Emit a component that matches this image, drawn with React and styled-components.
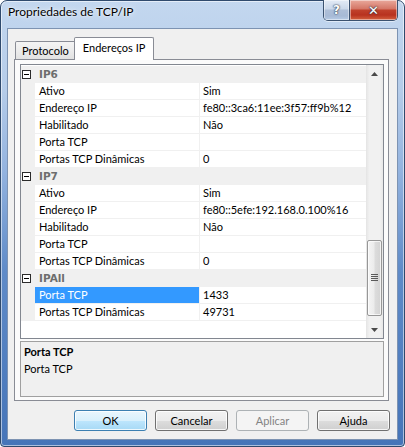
import React from 'react';
import styled, { createGlobalStyle, css } from 'styled-components';

const GlobalStyle = createGlobalStyle`
  html, body { margin: 0; padding: 0; background: #fff; }
  body { font-family: Lato, "Noto Sans", sans-serif; font-size: 11px; color: #000; }
  * { box-sizing: border-box; }
`;

const Window = styled.div`
  width: 405px;
  height: 447px;
  display: flex;
  flex-direction: column;
  border: 1px solid #2f4a6d;
  border-radius: 7px 7px 4px 4px;
  background: linear-gradient(180deg, #c3d7ef 0px, #b5cce9 90px, #93b3df 170px, #5f8bc8 270px, #4574b8 447px);
  box-shadow: inset 0 0 0 1px rgba(255, 255, 255, 0.55);
  padding: 0 6px 6px 6px;
`;

const TitleBar = styled.div`
  height: 27px;
  display: flex;
  align-items: flex-start;
`;

const Title = styled.div`
  flex: 1;
  padding: 3px 0 0 1px;
  line-height: 16px;
  font-size: 12px;
  color: #000;
  text-shadow: 0 0 6px rgba(255, 255, 255, 0.9), 0 0 2px rgba(255, 255, 255, 0.9);
`;

const CaptionGroup = styled.div`
  display: flex;
  margin-top: -1px;
  border: 1px solid #3b5270;
  border-top: none;
  border-radius: 0 0 5px 5px;
  overflow: hidden;
  box-shadow: 0 1px 0 rgba(255, 255, 255, 0.5);
`;

const CaptionButton = styled.div`
  height: 20px;
  width: ${(p) => (p.$close ? '47px' : '26px')};
  display: flex;
  align-items: center;
  justify-content: center;
  color: #fff;
  font-family: "DejaVu Sans", sans-serif;
  font-weight: bold;
  font-size: ${(p) => (p.$close ? '13px' : '12px')};
  text-shadow: 0 0 2px #1d2c40, 0 0 1px #1d2c40;
  box-shadow: inset 0 0 0 1px rgba(255, 255, 255, 0.45);
  ${(p) =>
    p.$close
      ? css`
          background: linear-gradient(180deg, #e9a99c 0%, #d47565 45%, #c0412c 50%, #b8321f 75%, #d4613f 100%);
        `
      : css`
          border-right: 1px solid #3b5270;
          background: linear-gradient(180deg, #e3ebf6 0%, #cbd8ea 45%, #aebfd8 50%, #a7bad6 80%, #b8cce6 100%);
        `}
`;

const Client = styled.div`
  flex: 1;
  display: flex;
  flex-direction: column;
  background: #f0f0f0;
  border: 1px solid #7d93b2;
  padding: 8px 8px 0 6px;
`;

const TabStrip = styled.div`
  height: 22px;
  display: flex;
  align-items: flex-end;
  padding-left: 1px;
`;

const Tab = styled.div`
  position: relative;
  border: 1px solid #898c95;
  border-bottom: none;
  border-radius: 2px 2px 0 0;
  line-height: 16px;
  white-space: nowrap;
  ${(p) =>
    p.$active
      ? css`
          z-index: 1;
          height: 23px;
          margin: 0 0 -1px -2px;
          padding: 2px 8px 0 8px;
          background: #fff;
        `
      : css`
          height: 18px;
          padding: 1px 6px 0 6px;
          background: linear-gradient(180deg, #f4f4f4 0%, #ececec 50%, #e2e2e2 100%);
        `}
`;

const Panel = styled.div`
  height: 342px;
  display: flex;
  flex-direction: column;
  gap: 2px;
  background: #fbfbfb;
  border: 1px solid #898c95;
  padding: 4px 4px 3px 5px;
`;

const Grid = styled.div`
  height: 275px;
  display: flex;
  border: 1px solid #828790;
  background: #fff;
`;

const GridBody = styled.div`
  flex: 1;
  padding-top: 1px;
  overflow: hidden;
`;

const Row = styled.div`
  height: 17px;
  display: flex;
  background: ${(p) => (p.$header ? '#f0f0f0' : '#fff')};
`;

const Gutter = styled.div`
  width: 14px;
  flex: none;
  background: #f0f0f0;
  display: flex;
  align-items: center;
  padding-left: 1px;
`;

const Toggle = styled.div`
  width: 9px;
  height: 9px;
  border: 1px solid #2b2b2b;
  background: #fff;
  display: flex;
  align-items: center;
  justify-content: center;
  &::after {
    content: '';
    width: 5px;
    height: 1px;
    background: #000;
  }
`;

const GroupName = styled.div`
  padding-left: 4px;
  font-family: "DejaVu Sans", sans-serif;
  font-weight: bold;
  font-size: 10.5px;
  line-height: 17px;
  color: #6d6d6d;
`;

const NameCell = styled.div`
  width: 165px;
  flex: none;
  padding-left: 4px;
  line-height: 16px;
  border-right: 1px solid #f0f0f0;
  border-bottom: 1px solid #f0f0f0;
  white-space: nowrap;
  ${(p) =>
    p.$selected &&
    css`
      background: #3399ff;
      color: #fff;
    `}
`;

const ValueCell = styled.div`
  flex: 1;
  padding-left: 3px;
  line-height: 16px;
  border-bottom: 1px solid #f0f0f0;
  white-space: nowrap;
  overflow: hidden;
`;

const ScrollBar = styled.div`
  width: 17px;
  flex: none;
  display: flex;
  flex-direction: column;
  background: linear-gradient(90deg, #e4e4e4 0%, #f1f1f1 20%, #f1f1f1 80%, #e7e7e7 100%);
`;

const ArrowButton = styled.div`
  height: 17px;
  display: flex;
  align-items: center;
  justify-content: center;
`;

const Track = styled.div`
  flex: 1;
  display: flex;
  flex-direction: column;
  align-items: center;
`;

const Thumb = styled.div`
  width: 15px;
  height: 76px;
  border: 1px solid #979797;
  border-radius: 2px;
  background: linear-gradient(90deg, #f4f4f4 0%, #ececec 45%, #dcdcdc 55%, #d3d3d3 100%);
  box-shadow: inset 0 0 0 1px rgba(255, 255, 255, 0.7);
  display: flex;
  align-items: center;
  justify-content: center;
`;

const Description = styled.div`
  height: 56px;
  border: 1px solid #a0a0a0;
  background: #f0f0f0;
  padding: 1px 3px;
  line-height: 17px;
`;

const DescTitle = styled.div`
  font-weight: bold;
`;

const ButtonRow = styled.div`
  display: flex;
  justify-content: flex-end;
  gap: 8px;
  margin: 9px -1px 0 0;
`;

const Button = styled.div`
  width: 73px;
  height: 21px;
  display: flex;
  align-items: center;
  justify-content: center;
  border-radius: 3px;
  border: 1px solid #707070;
  box-shadow: inset 0 0 0 1px rgba(255, 255, 255, 0.8);
  background: linear-gradient(180deg, #f2f2f2 0%, #ebebeb 50%, #dddddd 51%, #cfcfcf 100%);
  ${(p) =>
    p.$default &&
    css`
      border-color: #3c7fb1;
      background: linear-gradient(180deg, #eaf6fd 0%, #d9f0fc 50%, #bee6fd 51%, #a7d9f5 100%);
    `}
  ${(p) =>
    p.$disabled &&
    css`
      border-color: #adb2b5;
      background: #f4f4f4;
      color: #838383;
      box-shadow: none;
    `}
`;

const ArrowUp = () => (
  <svg width="7" height="4" viewBox="0 0 7 4">
    <path d="M3.5 0 L7 4 L0 4 Z" fill="#4a4a4a" />
  </svg>
);

const ArrowDown = () => (
  <svg width="7" height="4" viewBox="0 0 7 4">
    <path d="M0 0 L7 0 L3.5 4 Z" fill="#4a4a4a" />
  </svg>
);

const Grip = () => (
  <svg width="7" height="8" viewBox="0 0 7 8">
    {[0, 2, 4, 6].map((y) => (
      <rect key={y} x="0" y={y} width="7" height="1" fill="#5a5a5a" />
    ))}
  </svg>
);

const groups = [
  {
    name: 'IP6',
    rows: [
      ['Ativo', 'Sim'],
      ['Endereço IP', 'fe80::3ca6:11ee:3f57:ff9b%12'],
      ['Habilitado', 'Não'],
      ['Porta TCP', ''],
      ['Portas TCP Dinâmicas', '0'],
    ],
  },
  {
    name: 'IP7',
    rows: [
      ['Ativo', 'Sim'],
      ['Endereço IP', 'fe80::5efe:192.168.0.100%16'],
      ['Habilitado', 'Não'],
      ['Porta TCP', ''],
      ['Portas TCP Dinâmicas', '0'],
    ],
  },
  {
    name: 'IPAll',
    rows: [
      ['Porta TCP', '1433', true],
      ['Portas TCP Dinâmicas', '49731'],
    ],
  },
];

export default function App() {
  return (
    <>
      <GlobalStyle />
      <Window>
        <TitleBar>
          <Title>Propriedades de TCP/IP</Title>
          <CaptionGroup>
            <CaptionButton>?</CaptionButton>
            <CaptionButton $close>✕</CaptionButton>
          </CaptionGroup>
        </TitleBar>
        <Client>
          <TabStrip>
            <Tab>Protocolo</Tab>
            <Tab $active>Endereços IP</Tab>
          </TabStrip>
          <Panel>
            <Grid>
              <GridBody>
                {groups.map((g) => (
                  <React.Fragment key={g.name}>
                    <Row $header>
                      <Gutter>
                        <Toggle />
                      </Gutter>
                      <GroupName>{g.name}</GroupName>
                    </Row>
                    {g.rows.map(([n, v, sel]) => (
                      <Row key={g.name + n}>
                        <Gutter />
                        <NameCell $selected={sel}>{n}</NameCell>
                        <ValueCell>{v}</ValueCell>
                      </Row>
                    ))}
                  </React.Fragment>
                ))}
              </GridBody>
              <ScrollBar>
                <ArrowButton>
                  <ArrowUp />
                </ArrowButton>
                <Track>
                  <Thumb style={{ marginTop: 158 }}>
                    <Grip />
                  </Thumb>
                </Track>
                <ArrowButton>
                  <ArrowDown />
                </ArrowButton>
              </ScrollBar>
            </Grid>
            <Description>
              <DescTitle>Porta TCP</DescTitle>
              <div>Porta TCP</div>
            </Description>
          </Panel>
          <ButtonRow>
            <Button $default>OK</Button>
            <Button>Cancelar</Button>
            <Button $disabled>Aplicar</Button>
            <Button>Ajuda</Button>
          </ButtonRow>
        </Client>
      </Window>
    </>
  );
}
